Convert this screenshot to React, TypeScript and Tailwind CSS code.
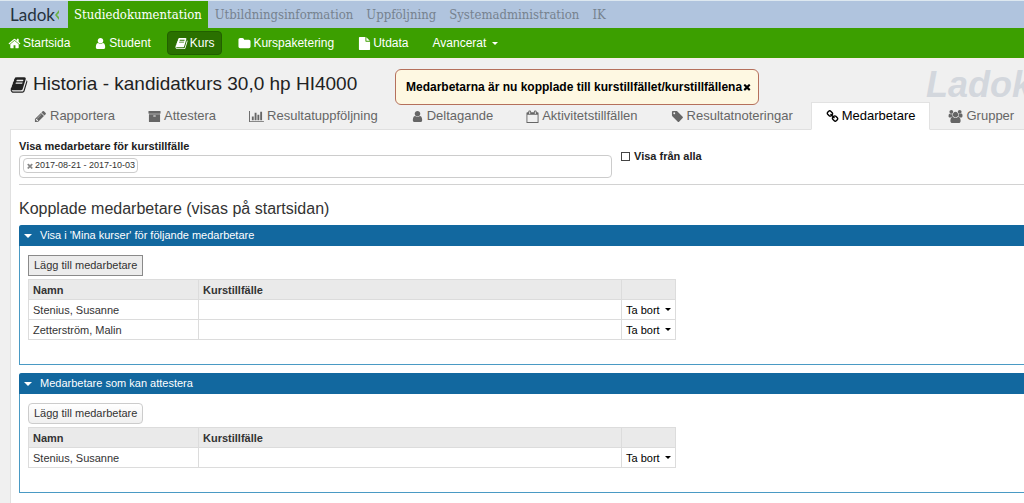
import clsx from 'clsx';

const icons = {
  home: 'M1472 992v480q0 26-19 45t-45 19h-384v-384h-256v384h-384q-26 0-45-19t-19-45v-480q0-1 .5-3t.5-3l575-474 575 474q1 2 1 6zm223-69l-62 74q-8 9-21 11h-3q-13 0-21-7l-692-577-692 577q-12 8-24 7-13-2-21-11l-62-74q-8-10-7-23.5t11-21.5l719-599q32-26 76-26t76 26l244 204v-195q0-14 9-23t23-9h192q14 0 23 9t9 23v408l219 182q10 8 11 21.5t-7 23.5z',
  user: 'M1536 1399q0 109-62.5 187t-150.5 78h-854q-88 0-150.5-78t-62.5-187q0-85 8.5-160.5t31.5-152 58.5-131 94-89 134.5-34.5q131 128 313 128t313-128q76 0 134.5 34.5t94 89 58.5 131 31.5 152 8.5 160.5zm-256-887q0 159-112.5 271.5t-271.5 112.5-271.5-112.5-112.5-271.5 112.5-271.5 271.5-112.5 271.5 112.5 112.5 271.5z',
  book: 'M1703 478q40 57 18 129l-275 906q-19 64-76.5 107.5t-122.5 43.5h-923q-77 0-148.5-53.5t-99.5-131.5q-24-67-2-127 0-4 3-27t4-37q1-8-3-21.5t-3-19.5q2-11 8-21t16.5-23.5 16.5-23.5q23-38 45-91.5t30-91.5q3-10 .5-30t-.5-28q3-11 17-28t17-23q21-36 42-92t25-90q1-9-2.5-32t.5-28q4-13 22-30.5t22-22.5q19-26 42.5-84.5t27.5-96.5q1-8-3-25.5t-2-26.5q2-8 9-18t18-23 17-21q8-12 16.5-30.5t15-35 16-36 19.5-32 26.5-23.5 36-11.5 47.5 5.5l-1 3q38-9 51-9h761q74 0 114 56t18 130l-274 906q-36 119-71.5 153.5t-128.5 34.5h-869q-27 0-38 15-11 16-1 43 24 70 144 70h923q29 0 56-15.5t35-41.5l300-987q7-22 5-57 38 15 59 43zm-1064 2q-4 13 2 22.5t20 9.5h608q13 0 25.5-9.5t16.5-22.5l21-64q4-13-2-22.5t-20-9.5h-608q-13 0-25.5 9.5t-16.5 22.5zm-83 256q-4 13 2 22.5t20 9.5h608q13 0 25.5-9.5t16.5-22.5l21-64q4-13-2-22.5t-20-9.5h-608q-13 0-25.5 9.5t-16.5 22.5z',
  folder: 'M1728 608v704q0 92-66 158t-158 66h-1216q-92 0-158-66t-66-158v-960q0-92 66-158t158-66h320q92 0 158 66t66 158v32h672q92 0 158 66t66 158z',
  file: 'M1152 512v-472q22 14 36 28l408 408q14 14 28 36h-472zm-128 32q0 40 28 68t68 28h544v1056q0 40-28 68t-68 28h-1344q-40 0-68-28t-28-68v-1600q0-40 28-68t68-28h800v544z',
  pencil: 'M491 1536l91-91-235-235-91 91v107h128v128h107zm523-928q0-22-22-22-10 0-17 7l-542 542q-7 7-7 17 0 22 22 22 10 0 17-7l542-542q7-7 7-17zm-54-192l416 416-832 832h-416v-416zm683 96q0 53-37 90l-166 166-416-416 166-165q36-38 90-38 53 0 91 38l235 234q37 39 37 91z',
  archive: 'M1088 832q0-26-19-45t-45-19h-256q-26 0-45 19t-19 45 19 45 45 19h256q26 0 45-19t19-45zm576-192v960q0 26-19 45t-45 19h-1408q-26 0-45-19t-19-45v-960q0-26 19-45t45-19h1408q26 0 45 19t19 45zm64-448v256q0 26-19 45t-45 19h-1536q-26 0-45-19t-19-45v-256q0-26 19-45t45-19h1536q26 0 45 19t19 45z',
  chart: 'M640 896v512h-256v-512h256zm384-512v1024h-256v-1024h256zm1024 1152v128h-2048v-1536h128v1408h1920zm-640-896v768h-256v-768h256zm384-384v1152h-256v-1152h256z',
  tag: 'M576 448q0-53-37.5-90.5t-90.5-37.5-90.5 37.5-37.5 90.5 37.5 90.5 90.5 37.5 90.5-37.5 37.5-90.5zm1067 576q0 53-37 90l-491 492q-39 37-91 37-53 0-90-37l-715-716q-38-37-64.5-101t-26.5-117v-416q0-52 38-90t90-38h416q53 0 117 26.5t102 64.5l715 714q37 39 37 91z',
  calendar: 'M192 1664h1408v-1024h-1408v1024zm384-1152v-288q0-14-9-23t-23-9h-64q-14 0-23 9t-9 23v288q0 14 9 23t23 9h64q14 0 23-9t9-23zm768 0v-288q0-14-9-23t-23-9h-64q-14 0-23 9t-9 23v288q0 14 9 23t23 9h64q14 0 23-9t9-23zm384-64v1280q0 52-38 90t-90 38h-1408q-52 0-90-38t-38-90v-1280q0-52 38-90t90-38h128v-96q0-66 47-113t113-47h64q66 0 113 47t47 113v96h384v-96q0-66 47-113t113-47h64q66 0 113 47t47 113v96h128q52 0 90 38t38 90z',
  link: 'M1520 1216q0-40-28-68l-208-208q-28-28-68-28-42 0-72 32 3 3 19 18.5t21.5 21.5 15 19 13 25.5 3.5 27.5q0 40-28 68t-68 28q-15 0-27.5-3.5t-25.5-13-19-15-21.5-21.5-18.5-19q-33 31-33 73 0 40 28 68l206 207q27 27 68 27 40 0 68-26l147-146q28-28 28-67zm-703-705q0-40-28-68l-206-207q-28-28-68-28-39 0-68 27l-147 146q-28 28-28 67 0 40 28 68l208 208q27 27 68 27 42 0 72-31-3-3-19-18.5t-21.5-21.5-15-19-13-25.5-3.5-27.5q0-40 28-68t68-28q15 0 27.5 3.5t25.5 13 19 15 21.5 21.5 18.5 19q33-31 33-73zm895 705q0 120-85 203l-147 146q-83 83-203 83-121 0-204-85l-206-207q-83-83-83-203 0-123 88-209l-88-88q-86 88-208 88-120 0-204-84l-208-208q-84-84-84-204t85-203l147-146q83-83 203-83 121 0 204 85l206 207q83 83 83 203 0 123-88 209l88 88q86-88 208-88 120 0 204 84l208 208q84 84 84 204z',
  users: 'M593 896q-162 5-265 128h-134q-82 0-138-40.5t-56-118.5q0-353 124-353 6 0 43.5 21t97.5 42.5 119 21.5q67 0 133-23-5 37-5 66 0 159 93 292zm1071 637q0 120-73 189.5t-194 69.5h-874q-121 0-194-69.5t-73-189.5q0-53 3.5-103.5t14-109 26.5-108.5 43-97.5 62-81 85.5-53.5 111.5-20q10 0 43 21.5t73 48 107 48 135 21.5 135-21.5 107-48 73-48 43-21.5q61 0 111.5 20t85.5 53.5 62 81 43 97.5 26.5 108.5 14 109 3.5 103.5zm-1024-1277q0 106-75 181t-181 75-181-75-75-181 75-181 181-75 181 75 75 181zm704 384q0 159-112.5 271.5t-271.5 112.5-271.5-112.5-112.5-271.5 112.5-271.5 271.5-112.5 271.5 112.5 112.5 271.5zm576 225q0 78-56 118.5t-138 40.5h-134q-103-123-265-128 93-133 93-292 0-29-5-66 66 23 133 23 59 0 119-21.5t97.5-42.5 43.5-21q124 0 124 353zm-128-609q0 106-75 181t-181 75-181-75-75-181 75-181 181-75 181 75 75 181z',
  times: 'M1490 1322q0 40-28 68l-136 136q-28 28-68 28t-68-28l-294-294-294 294q-28 28-68 28t-68-28l-136-136q-28-28-28-68t28-68l294-294-294-294q-28-28-28-68t28-68l136-136q28-28 68-28t68 28l294 294 294-294q28-28 68-28t68 28l136 136q28 28 28 68t-28 68l-294 294 294 294q28 28 28 68z',
};

type IconName = keyof typeof icons;

// chart and users are wider than the rest of the set
const iconWidths: Partial<Record<IconName, number>> = { chart: 2048, users: 1920 };

function Icon({ name, className = 'h-[13px] w-[13px]' }: { name: IconName; className?: string }) {
  return (
    <svg
      viewBox={`0 0 ${iconWidths[name] ?? 1792} 1792`}
      fill="currentColor"
      aria-hidden="true"
      className={clsx('shrink-0', className)}
    >
      <path d={icons[name]} />
    </svg>
  );
}

function Caret({ className = 'h-[3px] w-[6px]' }: { className?: string }) {
  return (
    <svg viewBox="0 0 8 4" fill="currentColor" aria-hidden="true" className={clsx('shrink-0', className)}>
      <path d="M0 0h8L4 4z" />
    </svg>
  );
}

const systemLinks = ['Studiedokumentation', 'Utbildningsinformation', 'Uppföljning', 'Systemadministration', 'IK'];

const menuItems: { label: string; icon: IconName; active?: boolean }[] = [
  { label: 'Startsida', icon: 'home' },
  { label: 'Student', icon: 'user' },
  { label: 'Kurs', icon: 'book', active: true },
  { label: 'Kurspaketering', icon: 'folder' },
  { label: 'Utdata', icon: 'file' },
];

const tabs: { label: string; icon: IconName; iconClass?: string; active?: boolean }[] = [
  { label: 'Rapportera', icon: 'pencil' },
  { label: 'Attestera', icon: 'archive' },
  { label: 'Resultatuppföljning', icon: 'chart', iconClass: 'h-[13px] w-[15px]' },
  { label: 'Deltagande', icon: 'user' },
  { label: 'Aktivitetstillfällen', icon: 'calendar' },
  { label: 'Resultatnoteringar', icon: 'tag' },
  { label: 'Medarbetare', icon: 'link', active: true },
  { label: 'Grupper', icon: 'users', iconClass: 'h-[13px] w-[15px]' },
];

function StaffPanel({ title, names, focused }: { title: string; names: string[]; focused?: boolean }) {
  return (
    <section className="rounded-tl-[3px] border border-r-0 border-[#4a9ac4] pb-6">
      <h3 className="-mt-px -ml-px rounded-tl-[3px] bg-[#12689f] text-white">
        <button type="button" aria-expanded="true" className="flex h-[21px] w-full items-center gap-2 px-[5px] text-[11px]">
          <Caret className="h-1 w-2" />
          {title}
        </button>
      </h3>
      <div className="px-2 pt-[9px]">
        <button
          type="button"
          className={clsx(
            'mb-[3px] h-[21px] border px-[5px] text-[11px] text-[#333]',
            focused ? 'border-[#8a8a8a] bg-[#ececec]' : 'rounded-sm border-[#ccc] bg-linear-to-b from-white to-[#f0f0f0]',
          )}
        >
          Lägg till medarbetare
        </button>
        <table className="w-[648px] table-fixed border-collapse text-left text-[11px] leading-4 text-[#333]">
          <thead>
            <tr className="h-5 bg-[#eaeaea]">
              <th className="w-[170px] border border-[#dcdcdc] px-1">Namn</th>
              <th className="border border-[#dcdcdc] px-1">Kurstillfälle</th>
              <td className="w-[54px] border border-[#dcdcdc]" />
            </tr>
          </thead>
          <tbody>
            {names.map((name) => (
              <tr key={name} className="h-5">
                <td className="border border-[#dcdcdc] px-1">{name}</td>
                <td className="border border-[#dcdcdc]" />
                <td className="border border-[#dcdcdc] px-1 text-black">
                  <button type="button" className="flex items-center gap-[5px] whitespace-nowrap">
                    Ta bort
                    <Caret />
                  </button>
                </td>
              </tr>
            ))}
          </tbody>
        </table>
      </div>
    </section>
  );
}

export default function App() {
  return (
    <div className="min-h-screen overflow-hidden bg-[#f0f0f0] font-['Liberation_Sans',Arial,sans-serif] text-[11px] text-[#222]">
      <header>
        <nav className="flex h-7 items-stretch gap-px border-t border-[#dde8f0] bg-[#b0c4de] font-['DejaVu_Serif_Condensed','DejaVu_Serif',serif] text-[13px] text-[#76828f]">
          <a href="#" aria-label="Ladok" className="flex w-[67px] items-center pl-2.5 font-[Lato,sans-serif] text-[17px] text-[#26333d]">
            Ladok
            <svg viewBox="0 0 4 10" className="h-2.5 w-1 fill-[#6cb344]" aria-hidden="true">
              <path d="M4 0v3L2 5l2 2v3L0 5z" />
            </svg>
          </a>
          {systemLinks.map((label, i) => (
            <a
              key={label}
              href="#"
              className={clsx('flex items-center px-1.5 whitespace-nowrap', i === 0 && 'bg-[#3c9f00] text-white')}
            >
              {label}
            </a>
          ))}
        </nav>
        <nav className="flex h-[30px] items-center gap-2 bg-[#3c9f00] text-xs text-white">
          {menuItems.map((item) => (
            <a
              key={item.label}
              href="#"
              className={clsx(
                'flex h-6 items-center gap-0.5 whitespace-nowrap',
                item.active ? 'rounded border border-[#226000] bg-[#2a7000] px-[7px]' : 'px-2',
              )}
            >
              <Icon name={item.icon} />
              {item.label}
            </a>
          ))}
          <button type="button" className="flex h-6 items-center gap-1.5 px-2">
            Avancerat
            <Caret />
          </button>
        </nav>
      </header>

      <div className="relative flex h-11 items-center justify-between border-t border-[#fbeee6] pt-2 pl-2.5">
        <h1 className="flex items-center gap-[5px] text-[19px] whitespace-nowrap text-[#222]">
          <Icon name="book" className="h-[18px] w-[18px]" />
          Historia - kandidatkurs 30,0 hp HI4000
        </h1>
        <div aria-hidden="true" className="w-[98px] text-4xl leading-9 font-bold whitespace-nowrap text-[#d3d7dd] italic">
          Ladok
        </div>
        <div
          role="status"
          className="absolute top-2.5 left-[395px] z-10 flex h-9 items-center rounded-md border border-[#b5705c] bg-[#fef8e2] pr-1.5 pl-2.5 text-xs font-bold whitespace-nowrap text-black"
        >
          Medarbetarna är nu kopplade till kurstillfället/kurstillfällena
          <button type="button" aria-label="Stäng">
            <Icon name="times" className="h-2.5 w-2.5" />
          </button>
        </div>
      </div>

      <nav className="relative z-1 -mb-px ml-2.5 flex gap-[3px] pl-[9px]">
        {tabs.map((tab) => (
          <a
            key={tab.label}
            href="#"
            className={clsx(
              'flex h-7 items-center gap-[3px] border px-3.5 text-[13px] whitespace-nowrap',
              tab.active ? 'border-[#e2e2e2] border-b-white bg-white text-black' : 'border-transparent text-[#666]',
            )}
          >
            <Icon name={tab.icon} className={tab.iconClass} />
            {tab.label}
          </a>
        ))}
      </nav>

      <main className="ml-2.5 min-h-[375px] border-t border-l border-[#e0e0e0] bg-white pt-2 pl-2">
        <div className="flex items-start gap-[9px]">
          <div className="w-[593px]">
            <label htmlFor="occasion" className="block leading-[17px] font-bold">
              Visa medarbetare för kurstillfälle
            </label>
            <div className="flex h-[23px] items-start rounded-sm border border-[#ccc] px-[3px] pt-0.5">
              <span className="flex h-[15px] items-center gap-px rounded-sm border border-[#ccc] px-0.5 text-[9px] whitespace-nowrap text-[#333]">
                <button type="button" aria-label="Ta bort 2017-08-21 - 2017-10-03" className="text-[#888]">
                  <Icon name="times" className="h-2 w-2" />
                </button>
                2017-08-21 - 2017-10-03
              </span>
              <input id="occasion" type="text" className="min-w-0 flex-1 outline-none" />
            </div>
          </div>
          <label className="mt-2.5 flex items-center gap-1 font-bold">
            <input type="checkbox" className="h-[9px] w-[9px] appearance-none border border-[#444] bg-white" />
            Visa från alla
          </label>
        </div>
        <hr className="mt-1.5 border-[#d2d2d2]" />

        <h2 className="mt-3 mb-1 text-base text-[#333]">Kopplade medarbetare (visas på startsidan)</h2>
        <div className="flex flex-col gap-2">
          <StaffPanel title="Visa i 'Mina kurser' för följande medarbetare" names={['Stenius, Susanne', 'Zetterström, Malin']} focused />
          <StaffPanel title="Medarbetare som kan attestera" names={['Stenius, Susanne']} />
        </div>
      </main>
    </div>
  );
}
